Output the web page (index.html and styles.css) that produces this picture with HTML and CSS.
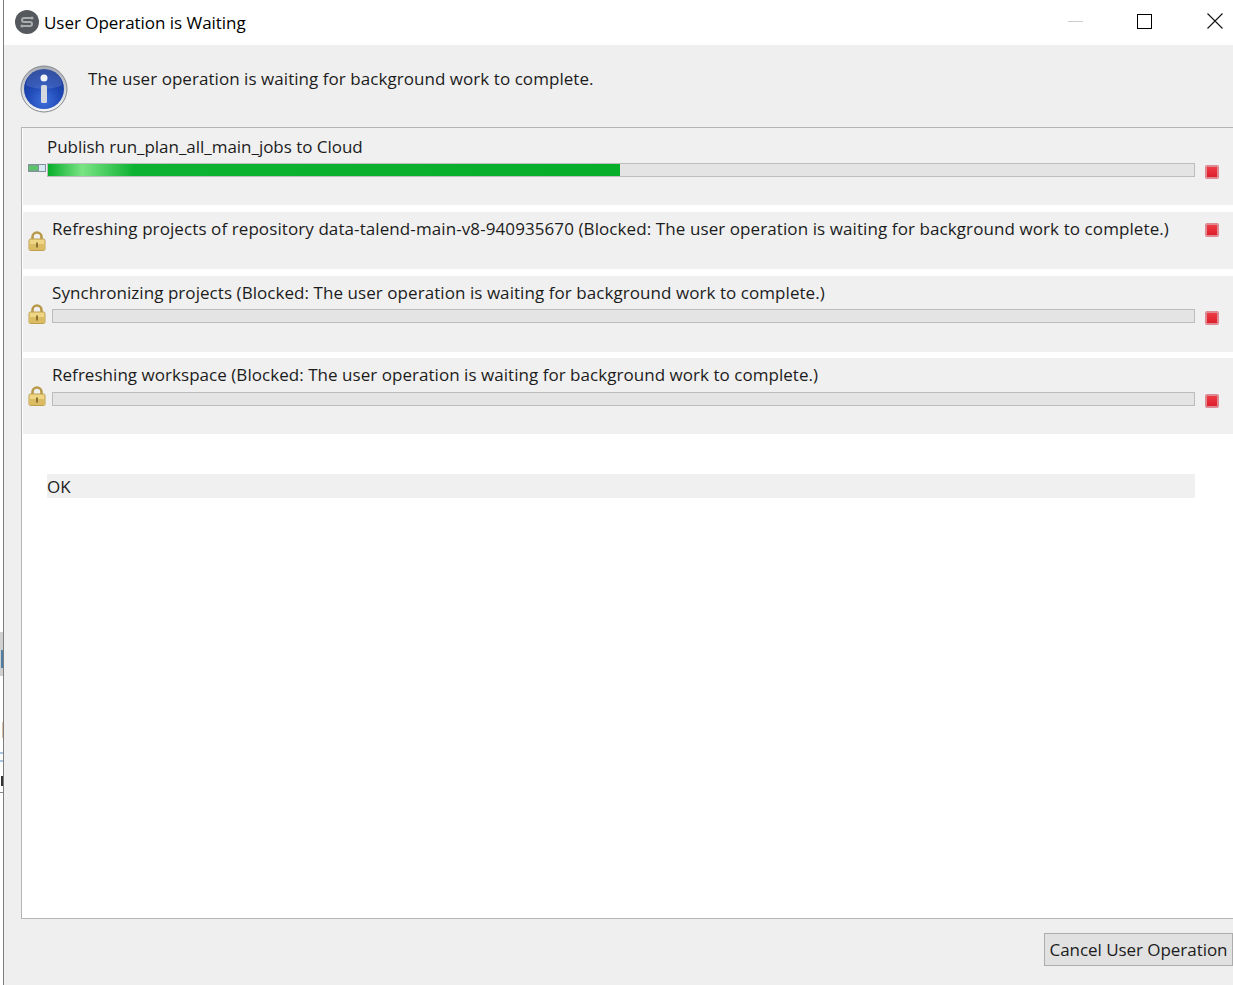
FILE: index.html
```html
<!DOCTYPE html>
<html>
<head>
    <title>User Operation is Waiting</title>
    <meta name="viewport" content="width=device-width, initial-scale=1.0">
    <link rel="stylesheet" href="styles.css">
</head>
<body>
    <!-- Bits of the window behind -->
    <div class="desktop-edge">
        <div class="edge-gap"></div>
        <div class="edge-grey tall"></div>
        <div class="edge-blue"></div>
        <div class="edge-grey"></div>
        <div class="edge-space wide"></div>
        <div class="edge-tan"></div>
        <div class="edge-space"></div>
        <div class="edge-line"></div>
        <div class="edge-space thin"></div>
        <div class="edge-line"></div>
        <div class="edge-space"></div>
        <div class="edge-dark"></div>
        <div class="edge-space thin"></div>
        <div class="edge-rule"></div>
    </div>

    <div class="dialog">
        <!-- Title bar -->
        <div class="titlebar">
            <svg class="app-icon" width="24" height="24" viewBox="0 0 24 24">
                <circle cx="12" cy="12" r="12" fill="#55585c"/>
                <path d="M16 8H9a2 2 0 0 0 0 4h6a2 2 0 0 1 0 4H8" fill="none" stroke="#a9abad" stroke-width="2"/>
                <circle cx="17" cy="8" r="1.600" fill="#a9abad"/>
                <circle cx="7" cy="16" r="1.600" fill="#a9abad"/>
            </svg>
            <span class="title">User Operation is Waiting</span>
            <div class="window-buttons">
                <span class="win-min"></span>
                <span class="win-max"></span>
                <svg class="win-close" width="16" height="16" viewBox="0 0 16 16">
                    <path d="M.5.5l15 15M15.5.5l-15 15" stroke="#111" stroke-width="1.100"/>
                </svg>
            </div>
        </div>

        <!-- Message -->
        <div class="message-area">
            <svg class="info-icon" width="48" height="48" viewBox="0 0 48 48">
                <defs>
                    <radialGradient id="infoBlue" cx="50%" cy="80%" r="75%">
                        <stop offset="0" stop-color="#3c6fdc"/>
                        <stop offset="0.6" stop-color="#1d46b2"/>
                        <stop offset="1" stop-color="#173a98"/>
                    </radialGradient>
                    <linearGradient id="infoRing" x1="0" y1="0" x2="0" y2="1">
                        <stop offset="0" stop-color="#a9adb4"/>
                        <stop offset="1" stop-color="#f4f5f7"/>
                    </linearGradient>
                </defs>
                <circle cx="24" cy="24" r="23" fill="url(#infoRing)" stroke="#85898f"/>
                <circle cx="24" cy="24" r="20" fill="url(#infoBlue)"/>
                <path d="M6 20a18 16 0 0 1 36 0c-8 5-28 5-36 0z" fill="#fff" opacity="0.12"/>
                <circle cx="24" cy="13" r="3.500" fill="#f3f5f9"/>
                <rect x="21" y="20" width="6" height="18" rx="1.500" fill="#d5d8df"/>
            </svg>
            <p class="message-text">The user operation is waiting for background work to complete.</p>
        </div>

        <!-- Job list -->
        <div class="job-list">
            <div class="job job-first">
                <div class="job-icon">
                    <svg class="bar-icon" width="18" height="8" viewBox="0 0 18 8">
                        <rect x="0" y="0" width="18" height="8" fill="#7f929c"/>
                        <rect x="1" y="1.500" width="9" height="5" fill="#5ec46a"/>
                        <rect x="11" y="1" width="6" height="6" fill="#d6e8f2"/>
                    </svg>
                </div>
                <div class="job-main">
                    <div class="job-name">Publish run_plan_all_main_jobs to Cloud</div>
                    <div class="progress"><div class="progress-fill" style="width: 49.9%"></div></div>
                </div>
                <div class="stop"></div>
            </div>

            <div class="job job-nobar">
                <div class="job-icon">
                    <svg class="lock" width="18" height="20" viewBox="0 0 18 20">
                        <path d="M4.500 9V6a4.500 4.500 0 0 1 9 0v3" fill="none" stroke="#b8994a" stroke-width="2.600"/>
                        <rect x="1" y="8" width="16" height="11.500" rx="1.500" fill="#efd684" stroke="#bd9f4e"/>
                        <rect x="1.500" y="13" width="15" height="6" fill="#dcbc62"/>
                        <rect x="8" y="11.500" width="2" height="5" fill="#8a7230"/>
                    </svg>
                </div>
                <div class="job-main">
                    <div class="job-name">Refreshing projects of repository data-talend-main-v8-940935670 (Blocked: The user operation is waiting for background work to complete.)</div>
                </div>
                <div class="stop"></div>
            </div>

            <div class="job job-sync">
                <div class="job-icon">
                    <svg class="lock" width="18" height="20" viewBox="0 0 18 20">
                        <path d="M4.500 9V6a4.500 4.500 0 0 1 9 0v3" fill="none" stroke="#b8994a" stroke-width="2.600"/>
                        <rect x="1" y="8" width="16" height="11.500" rx="1.500" fill="#efd684" stroke="#bd9f4e"/>
                        <rect x="1.500" y="13" width="15" height="6" fill="#dcbc62"/>
                        <rect x="8" y="11.500" width="2" height="5" fill="#8a7230"/>
                    </svg>
                </div>
                <div class="job-main">
                    <div class="job-name">Synchronizing projects (Blocked: The user operation is waiting for background work to complete.)</div>
                    <div class="progress"></div>
                </div>
                <div class="stop"></div>
            </div>

            <div class="job job-last">
                <div class="job-icon">
                    <svg class="lock" width="18" height="20" viewBox="0 0 18 20">
                        <path d="M4.500 9V6a4.500 4.500 0 0 1 9 0v3" fill="none" stroke="#b8994a" stroke-width="2.600"/>
                        <rect x="1" y="8" width="16" height="11.500" rx="1.500" fill="#efd684" stroke="#bd9f4e"/>
                        <rect x="1.500" y="13" width="15" height="6" fill="#dcbc62"/>
                        <rect x="8" y="11.500" width="2" height="5" fill="#8a7230"/>
                    </svg>
                </div>
                <div class="job-main">
                    <div class="job-name">Refreshing workspace (Blocked: The user operation is waiting for background work to complete.)</div>
                    <div class="progress"></div>
                </div>
                <div class="stop"></div>
            </div>

            <div class="status-line">OK</div>
        </div>

        <!-- Buttons -->
        <div class="button-bar">
            <button class="cancel-btn">Cancel User Operation</button>
        </div>
    </div>
</body>
</html>
```

FILE: styles.css
```css
html, body {
    margin: 0;
    padding: 0;
    height: 100%;
}

body {
    display: flex;
    height: 985px;
    overflow: hidden;
    background: #fff;
    color: #1c1c1c;
    font-family: 'Open Sans', 'Noto Sans', sans-serif;
    font-size: 17px;
}

/* Left sliver of the desktop */
.desktop-edge {
    width: 3px;
    flex: none;
    display: flex;
    flex-direction: column;
}
.edge-gap { height: 632px; }
.edge-grey { height: 8px; background: #d0d0d0; }
.edge-grey.tall { height: 18px; }
.edge-blue { height: 18px; background: #d0d0d0; border-right: 2px solid #4f7fa8; box-sizing: border-box; }
.edge-space { height: 14px; }
.edge-space.wide { height: 46px; }
.edge-space.thin { height: 6px; }
.edge-tan { height: 16px; border-right: 1px solid #d9bfa0; box-sizing: border-box; }
.edge-line { height: 2px; background: #a9c4e0; }
.edge-dark { height: 10px; border-right: 2px solid #333; box-sizing: border-box; }
.edge-rule { height: 1px; background: #888; }

.dialog {
    flex: 1;
    min-width: 0;
    display: flex;
    flex-direction: column;
    background: #efefef;
    border-left: 1px solid #7d7d7d;
}

/* Title bar */
.titlebar {
    height: 45px;
    flex: none;
    display: flex;
    align-items: center;
    background: #fff;
    padding-left: 11px;
    color: #000;
}
.app-icon {
    margin-right: 5px;
    margin-top: -2px;
}
.title {
    letter-spacing: -0.04px;
}
.window-buttons {
    margin-left: auto;
    display: flex;
    align-items: center;
    margin-top: -3px;
}
.win-min {
    width: 15px;
    height: 1px;
    background: #ccc;
}
.win-max {
    width: 13px;
    height: 13px;
    border: 1.5px solid #000;
    margin-left: 54px;
}
.win-close {
    margin-left: 55px;
    margin-right: 10px;
}

/* Message */
.message-area {
    height: 82px;
    flex: none;
    display: flex;
    align-items: flex-start;
    padding-left: 16px;
}
.info-icon {
    margin-top: 20px;
}
.message-text {
    margin: 22px 0 0 20px;
    line-height: 24px;
    letter-spacing: 0.05px;
}

/* Job list */
.job-list {
    flex: 1;
    min-height: 0;
    margin-left: 17px;
    background: #fff;
    border: 1px solid #b4b4b4;
    border-right: none;
    padding-left: 1px;
}

.job {
    display: flex;
    height: 76px;
    margin-bottom: 6px;
    background: #f0f0f0;
}
.job-first {
    height: 77px;
    margin-bottom: 7px;
}
.job-nobar {
    height: 57px;
    margin-bottom: 7px;
}

.job-icon {
    width: 29px;
    flex: none;
    padding-left: 5px;
    box-sizing: border-box;
}
.bar-icon {
    display: block;
    margin-top: 36px;
}
.job-first .job-icon {
    width: 24px;
}
.lock {
    display: block;
    margin-top: 28px;
}
.job-nobar .lock {
    margin-top: 19px;
}

.job-main {
    flex: 1;
    min-width: 0;
}
.job-name {
    line-height: 24px;
    margin-top: 5px;
    white-space: nowrap;
    letter-spacing: 0.06px;
}
.job-first .job-name {
    margin-top: 7px;
    letter-spacing: -0.03px;
}
.job-nobar .job-name {
    letter-spacing: 0.09px;
}
.job-last .job-name {
    letter-spacing: 0.04px;
}

.progress {
    height: 12px;
    margin-top: 4px;
    background: #e4e4e4;
    border: 1px solid #bcbcbc;
}
.job-last .progress {
    margin-top: 5px;
}
.progress-fill {
    height: 100%;
    background: linear-gradient(90deg, #07ae2a 0, #7be484 6%, #0db232 15%, #07ae2a 100%);
}

.stop {
    width: 10px;
    height: 10px;
    flex: none;
    margin: 35px 14px 0 10px;
    background: linear-gradient(#ee3a44, #dc1f2c);
    border: 2px solid #dd8a92;
    border-radius: 2px;
}
.job-first .stop {
    margin-top: 37px;
}
.job-nobar .stop {
    margin-top: 11px;
}
.job-last .stop {
    margin-top: 36px;
}

.status-line {
    margin: 40px 38px 0 24px;
    height: 24px;
    line-height: 26px;
    background: #f0f0f0;
}

/* Buttons */
.button-bar {
    height: 66px;
    flex: none;
    display: flex;
    justify-content: flex-end;
    align-items: flex-start;
}
.cancel-btn {
    margin-top: 14px;
    width: 189px;
    height: 33px;
    padding: 0;
    font: inherit;
    letter-spacing: -0.05px;
    color: #1c1c1c;
    background: #e1e1e1;
    border: 1px solid #adadad;
}
```
